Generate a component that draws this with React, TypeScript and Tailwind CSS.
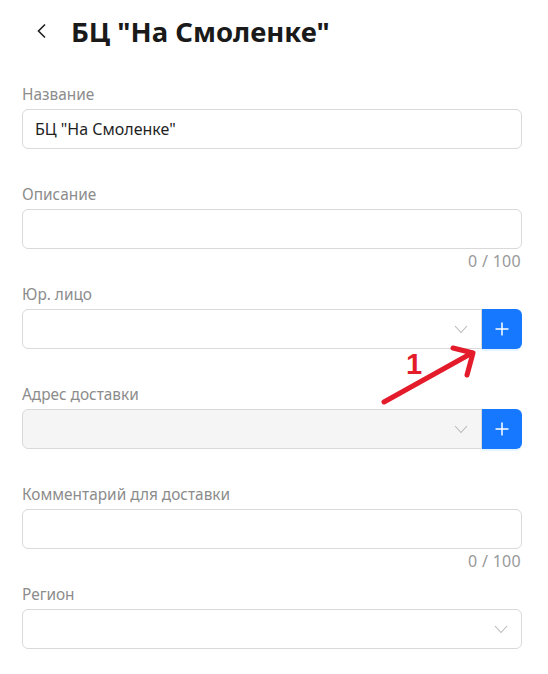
import React from "react";

const font = { fontFamily: '"Noto Sans", "Open Sans", Arial, sans-serif' };

function Chevron({ className = "" }: { className?: string }) {
  return (
    <svg width="14" height="10" viewBox="0 0 14 10" className={className} fill="none">
      <path d="M1 2 L7 8.5 L13 2" stroke="#b8b8b8" strokeWidth="1.1" />
    </svg>
  );
}

function Plus() {
  return (
    <svg width="16" height="16" viewBox="0 0 16 16" fill="none">
      <path d="M8 1.5 V14.5 M1.5 8 H14.5" stroke="white" strokeWidth="1.5" />
    </svg>
  );
}

function Label({ children }: { children: React.ReactNode }) {
  return <div className="h-6 leading-6 text-[15.4px] text-[#8c8c8c] mb-[2px]">{children}</div>;
}

function Counter() {
  return <div className="h-6 leading-6 text-[16px] text-[#999999] text-right pr-px mb-[10px] tracking-[0.3px]">0 / 100</div>;
}

export default function App() {
  return (
    <div className="relative w-[548px] h-[674px] bg-white overflow-hidden" style={font}>
      <div className="flex items-center h-[64px] pl-[36px]">
        <svg width="12" height="16" viewBox="0 0 12 16" fill="none" className="mt-[-2px]">
          <path d="M9 1.5 L2.5 8 L9 14.5" stroke="#1f1f1f" strokeWidth="1.6" />
        </svg>
        <h1 className="ml-[23px] text-[27.5px] font-bold text-[#1a1a1a] leading-none">БЦ "На Смоленке"</h1>
      </div>
      <div className="pl-[22px] pr-[26px] pt-[19px]">
        <Label>Название</Label>
        <div className="h-10 rounded-[6px] border border-[#d9d9d9] px-[12px] flex items-center text-[16px] text-[#1f1f1f] mb-[34px]">
          БЦ "На Смоленке"
        </div>

        <Label>Описание</Label>
        <div className="h-10 rounded-[6px] border border-[#d9d9d9]" />
        <Counter />

        <Label>Юр. лицо</Label>
        <div className="flex h-10 mb-[34px]">
          <div className="flex-1 rounded-l-[6px] border border-[#d9d9d9] flex items-center justify-end pr-[13px]">
            <Chevron />
          </div>
          <div className="w-10 rounded-r-[6px] bg-[#1677ff] flex items-center justify-center shadow-[0_2px_0_rgba(5,145,255,0.1)]">
            <Plus />
          </div>
        </div>

        <Label>Адрес доставки</Label>
        <div className="flex h-10 mb-[34px]">
          <div className="flex-1 rounded-l-[6px] border border-[#d9d9d9] bg-[#f5f5f5] flex items-center justify-end pr-[13px]">
            <Chevron />
          </div>
          <div className="w-10 rounded-r-[6px] bg-[#1677ff] flex items-center justify-center shadow-[0_2px_0_rgba(5,145,255,0.1)]">
            <Plus />
          </div>
        </div>

        <Label>Комментарий для доставки</Label>
        <div className="h-10 rounded-[6px] border border-[#d9d9d9]" />
        <Counter />

        <Label>Регион</Label>
        <div className="h-10 rounded-[6px] border border-[#d9d9d9] flex items-center justify-end pr-[13px]">
          <Chevron />
        </div>
      </div>

      <svg className="absolute left-0 top-0 pointer-events-none" width="548" height="674" viewBox="0 0 548 674" fill="none">
        <path d="M384 402 L472 353" stroke="#e31b2b" strokeWidth="5" strokeLinecap="round" />
        <path d="M453 348 L473 353 L467 375" stroke="#e31b2b" strokeWidth="5" strokeLinecap="round" strokeLinejoin="round" />
        <text x="406" y="374" fill="#e31b2b" fontSize="29" fontWeight="bold" fontFamily="'Liberation Sans', Arial, sans-serif">1</text>
      </svg>
    </div>
  );
}
